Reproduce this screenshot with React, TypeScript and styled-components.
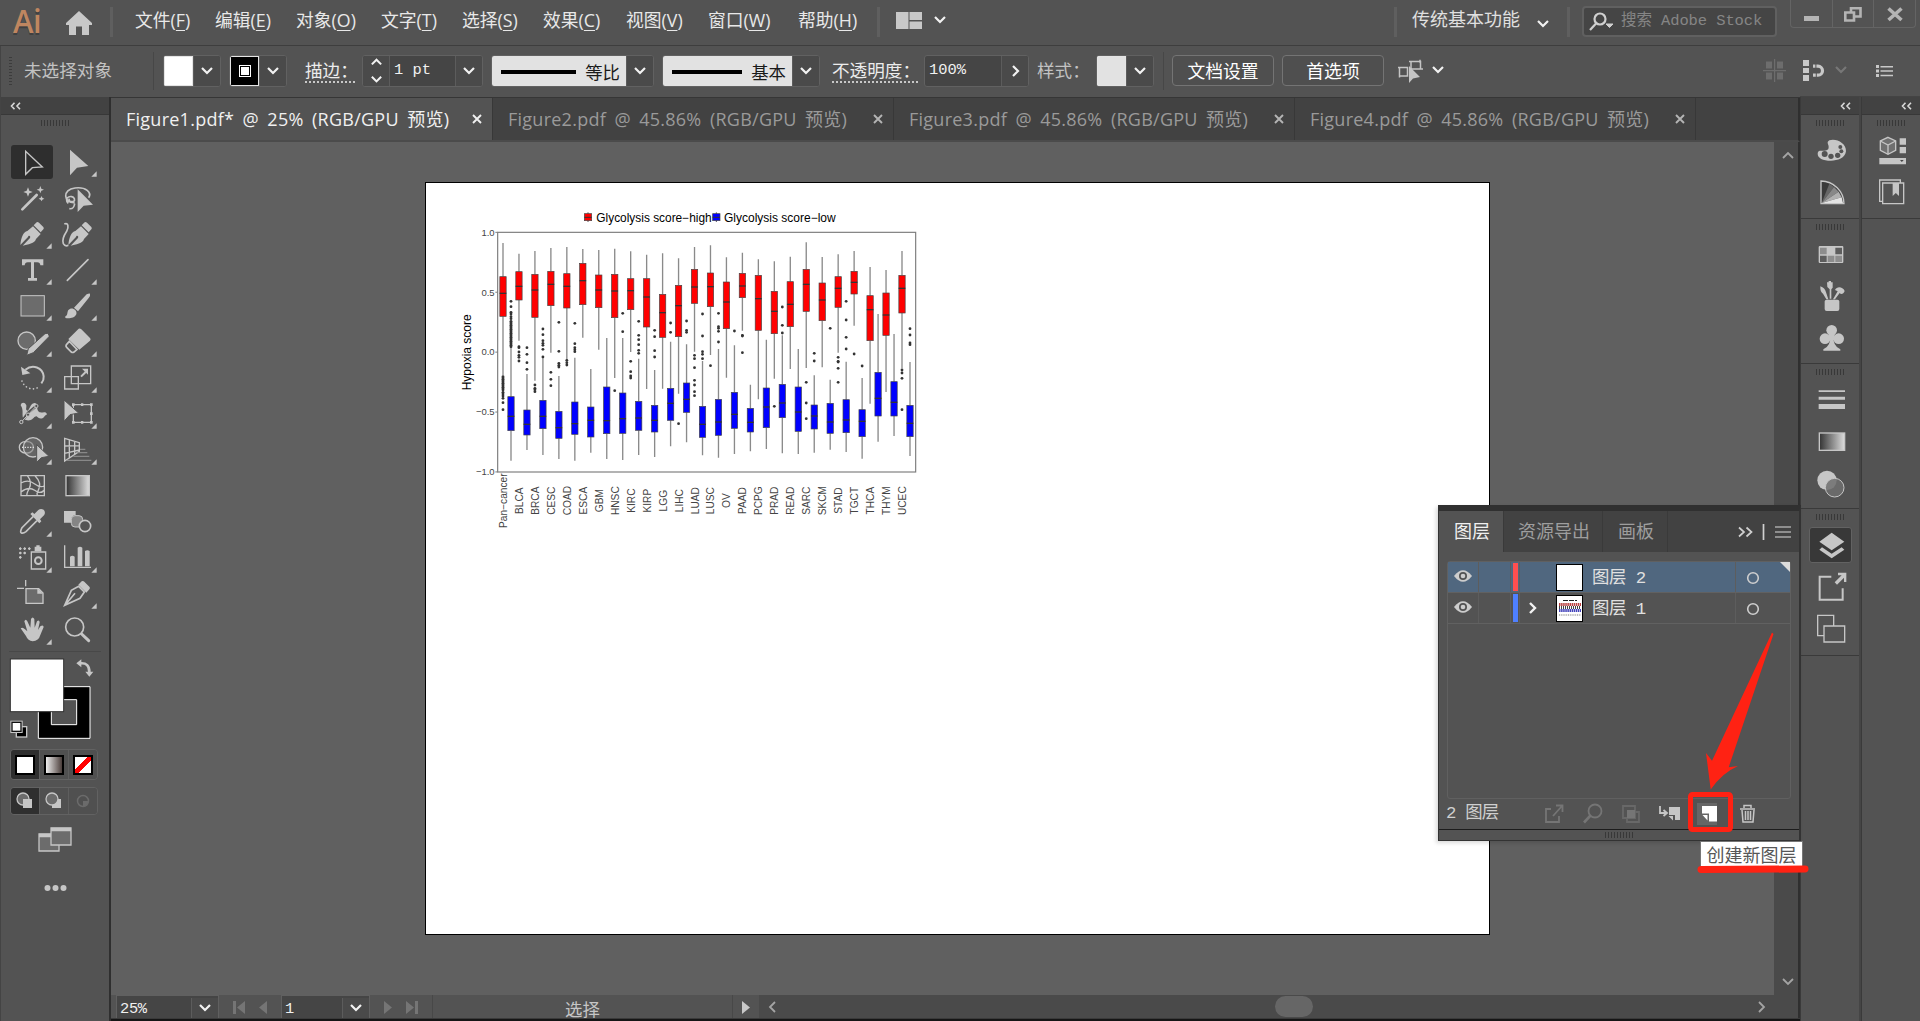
import React from "react";
import styled, { createGlobalStyle, css } from "styled-components";

const ICON = "#c6c6c6";
const UI_FONT = '"Open Sans", "Noto Sans CJK SC", sans-serif';
const MONO_FONT = '"Liberation Mono", "Noto Sans CJK SC", monospace';

const GlobalStyle = createGlobalStyle`
  * { box-sizing: border-box; }
  body { margin: 0; overflow: hidden; background: #535353; }
  svg { display: block; flex: none; }
`;

/* ---------- shell ---------- */
const Shell = styled.div`
  display: grid;
  grid-template-rows: 46px 51px 1fr;
  width: 1920px;
  height: 1021px;
  background: #535353;
  color: #e8e8e8;
  font: 18px/24px ${UI_FONT};
  white-space: nowrap;
  overflow: hidden;
  position: relative;
`;
const Body = styled.div`
  display: grid;
  grid-template-columns: 111px 1fr 120px;
  min-height: 0;
`;

/* ---------- menu bar ---------- */
const MenuBar = styled.header`
  display: flex;
  align-items: flex-start;
  border-bottom: 1px solid #3e3e3e;
`;
const Logo = styled.div`
  width: 40px;
  margin-left: 13px;
  font: 600 32px/41px "Open Sans", sans-serif;
  letter-spacing: -0.5px;
  transform: scaleX(0.97);
  transform-origin: left;
  color: #bf8660;
  text-shadow: 0 2px 0 #404040;
`;
const MenuDivider = styled.i<{ $ml: number }>`
  flex: none;
  width: 3px;
  height: 30px;
  margin: 7px 0 0 ${(p) => p.$ml}px;
  background: #5f5f5f;
`;
const Menus = styled.nav`
  display: flex;
  margin: 8px 0 0 22px;
`;
const MenuItem = styled.span<{ $w: number }>`
  width: ${(p) => p.$w}px;
  font-size: 17.8px;
  line-height: 25px;
  u { text-underline-offset: 3px; text-decoration-thickness: 1px; }
`;
const Slot = styled.div<{ $ml?: number; $mt?: number }>`
  flex: none;
  margin: ${(p) => p.$mt ?? 0}px 0 0 ${(p) => p.$ml ?? 0}px;
`;
const Workspace = styled.span`
  margin: 7px 0 0 15px;
  width: 124px;
  line-height: 24px;
  color: #e0e0e0;
`;
const SearchBox = styled.div`
  display: flex;
  align-items: center;
  width: 195px;
  height: 31px;
  margin: 6px 0 0 12px;
  padding-left: 5px;
  border: 2px solid #606060;
  border-radius: 4px;
  background: #454545;
  color: #858585;
  font: 15.5px/26px ${MONO_FONT};
  letter-spacing: -0.1px;
  span { margin: -1px 0 0 6px; }
`;
const WindowButtons = styled.div`
  display: flex;
  margin-left: 13px;
  width: 126px;
  height: 28px;
  border: 1px solid #646464;
  border-top: 0;
  border-radius: 0 0 4px 4px;
`;
const WindowButton = styled.div`
  flex: 1;
  display: flex;
  justify-content: center;
  & + & { border-left: 1px solid #646464; }
`;

/* ---------- control bar ---------- */
const ControlBar = styled.div`
  display: flex;
  align-items: flex-start;
  padding: 10px 0 0 8px;
  border-left: 1px solid #444;
`;
const DotGrip = styled.i`
  width: 3px;
  height: 28px;
  margin-top: 1px;
  background: repeating-linear-gradient(#3c3c3c 0 1px, transparent 1px 3px);
`;
const Note = styled.span<{ $ml: number; $w: number; $dim?: boolean; $dots?: boolean }>`
  flex: none;
  width: ${(p) => p.$w}px;
  margin-left: ${(p) => p.$ml}px;
  height: ${(p) => (p.$dots ? 27 : 28)}px;
  font-size: 17.6px;
  line-height: ${(p) => (p.$dots ? 29 : 28)}px;
  color: ${(p) => (p.$dim ? "#c2c2c2" : "#ececec")};
  ${(p) => p.$dots && css`border-bottom: 2px dotted #c8c8c8;`}
`;
const BarDivider = styled.i<{ $ml: number }>`
  flex: none;
  width: 1px;
  height: 38px;
  margin: -4px 0 0 ${(p) => p.$ml}px;
  background: #474747;
`;
const Combo = styled.div<{ $ml: number; $w: number }>`
  flex: none;
  display: flex;
  width: ${(p) => p.$w}px;
  height: 32px;
  margin: -1px 0 0 ${(p) => p.$ml}px;
  border: 1px solid #616161;
  border-radius: 3px;
  background: #454545;
  overflow: hidden;
`;
const Drop = styled.div<{ $w?: number; $left?: boolean }>`
  flex: none;
  display: flex;
  align-items: center;
  justify-content: center;
  width: ${(p) => p.$w ?? 27}px;
  background: #4a4a4a;
  border-left: ${(p) => (p.$left ? 0 : 1)}px solid #5c5c5c;
`;
const Spin = styled(Drop)`
  flex-direction: column;
  gap: 4px;
  border-right: 1px solid #5c5c5c;
`;
const Swatch = styled.div<{ $c: string }>`
  flex: 1;
  display: flex;
  align-items: center;
  justify-content: center;
  border: 1px solid #e4e4e4;
  background: ${(p) => p.$c};
`;
const StrokeCore = styled.i`
  width: 10px;
  height: 10px;
  background: #fff;
  border: 1px solid #000;
  outline: 1px solid #fff;
`;
const Value = styled.span`
  flex: 1;
  padding: 1px 0 0 4px;
  font: 15.4px/26px ${MONO_FONT};
  color: #f0f0f0;
`;
const LineSample = styled.div`
  flex: 1;
  display: flex;
  align-items: center;
  justify-content: space-between;
  padding: 2px 6px 0 9px;
  background: #e2e2e2;
  color: #1a1a1a;
  font-size: 17.4px;
  i { height: 4px; flex: 1; margin: -1px 9px 0 0; background: #000; }
`;
const BarButton = styled.button<{ $ml: number; $w: number }>`
  flex: none;
  width: ${(p) => p.$w}px;
  height: 31px;
  margin: -1px 0 0 ${(p) => p.$ml}px;
  padding: 1px 0 0;
  border: 1px solid #747474;
  border-radius: 4px;
  background: #4f4f4f;
  color: #fff;
  font: 17.8px/26px ${UI_FONT};
`;

/* ---------- tool panel ---------- */
const ToolPanel = styled.aside`
  display: flex;
  flex-direction: column;
  border-left: 1px solid #444;
  border-right: 2px solid #2f2f2f;
`;
const PanelHeader = styled.div<{ $right?: boolean }>`
  display: flex;
  align-items: center;
  justify-content: ${(p) => (p.$right ? "flex-end" : "flex-start")};
  flex: none;
  height: 18px;
  padding: 0 8px;
  background: #424242;
  border-bottom: 1px solid #383838;
`;
const Grip = styled.i`
  flex: none;
  width: 28px;
  height: 6px;
  margin: 5px auto 0;
  background: repeating-linear-gradient(90deg, #383838 0 1px, transparent 1px 3px);
`;
const ToolGrid = styled.div`
  display: grid;
  grid-template-columns: 42px 42px;
  grid-auto-rows: 36px;
  column-gap: 3px;
  margin: 18px 0 0 10px;
`;
const ToolCell = styled.div<{ $on?: boolean }>`
  display: flex;
  align-items: center;
  height: 34px;
  margin-top: 1px;
  border-radius: 3px;
  background: ${(p) => (p.$on ? "#2e2e2e" : "transparent")};
  svg { overflow: visible; }
`;
const ToolRule = styled.i`
  height: 1px;
  margin: 3px 8px 0;
  background: #484848;
`;
const FillStroke = styled.div`
  height: 92px;
  margin: 4px 0 0 8px;
`;
const ModeRow = styled.div<{ $h: number; $mt: number }>`
  display: flex;
  width: 88px;
  height: ${(p) => p.$h}px;
  margin: ${(p) => p.$mt}px 0 0 9px;
  border: 1px solid #626262;
  border-radius: 4px;
  overflow: hidden;
`;
const Mode = styled.div<{ $on?: boolean }>`
  flex: 1;
  display: flex;
  align-items: center;
  justify-content: center;
  background: ${(p) => (p.$on ? "#2f2f2f" : "#505050")};
  & + & { border-left: 1px solid #5e5e5e; }
`;
const ModeChip = styled.i<{ $bg: string }>`
  width: 20px;
  height: 20px;
  border: 2px solid #000;
  background: ${(p) => p.$bg};
`;

/* ---------- document area ---------- */
const Center = styled.main`
  display: grid;
  grid-template-rows: 44px 1fr 23px 3px;
  min-width: 0;
  border-top: 1px solid #363636;
`;
const TabBar = styled.div`
  display: flex;
  background: #424242;
  border-bottom: 2px solid #4b4b4b;
  border-right: 2px solid #2f2f2f;
`;
const Tab = styled.div<{ $w: number; $on?: boolean }>`
  display: flex;
  align-items: center;
  justify-content: space-between;
  width: ${(p) => p.$w}px;
  padding: 0 10px 0 15px;
  border-right: 1px solid #383838;
  background: ${(p) => (p.$on ? "#535353" : "transparent")};
  color: ${(p) => (p.$on ? "#f0f0f0" : "#9a9a9a")};
  font-size: 18px;
  letter-spacing: 0.25px;
  word-spacing: 3.5px;
  padding-bottom: 1px;
`;
const Workarea = styled.div`
  display: grid;
  grid-template-columns: 1fr 24px;
  border-right: 2px solid #2f2f2f;
  min-height: 0;
`;
const Canvas = styled.div`
  position: relative;
  background: #606060;
`;
const Artboard = styled.div`
  position: absolute;
  left: 314px;
  top: 40px;
  width: 1065px;
  height: 753px;
  padding: 17px 0 0 24px;
  border: 1px solid #000;
  background: #fff;
`;
const VScroll = styled.div`
  display: flex;
  flex-direction: column;
  align-items: center;
  justify-content: space-between;
  padding: 7px 0 6px 3px;
  background: #4a4a4a;
`;
const StatusBar = styled.div`
  display: flex;
  align-items: center;
  padding-left: 5px;
  background: #535353;
  border-right: 2px solid #2f2f2f;
`;
const StatusField = styled.div<{ $w: number }>`
  display: flex;
  align-self: stretch;
  width: ${(p) => p.$w}px;
  padding-top: 2px;
  background: #454545;
  border: 1px solid #606060;
  border-bottom: 0;
  span { flex: 1; padding-left: 3px; font: 15.4px/23px ${MONO_FONT}; letter-spacing: -0.3px; color: #f0f0f0; }
`;
const StatusNav = styled.div<{ $w: number }>`
  display: flex;
  align-items: center;
  justify-content: space-evenly;
  width: ${(p) => p.$w}px;
  padding-top: 2px;
`;
const StatusText = styled.div`
  width: 301px;
  height: 23px;
  border: solid #484848;
  border-width: 0 1px;
  text-align: center;
  font-size: 17.4px;
  line-height: 29px;
  color: #c6c6c6;
`;
const HScroll = styled.div`
  flex: 1;
  align-self: stretch;
  display: flex;
  align-items: center;
  padding: 0 30px 0 7px;
  background: #4a4a4a;
`;
const Thumb = styled.i`
  width: 38px;
  height: 21px;
  margin: 0 auto 0 495px;
  border-radius: 11px;
  background: #666;
`;
const BottomEdge = styled.div`
  position: relative;
  background: #151515;
  border-top: 1px solid #3a3a3a;
`;

/* ---------- docks ---------- */
const Docks = styled.aside`
  display: grid;
  grid-template-columns: 61px 59px;
  border-top: 1px solid #444;
  margin-top: -1px;
`;
const Dock = styled.div`
  display: flex;
  flex-direction: column;
  border-left: 1px solid #3a3a3a;
  border-right: 2px solid #454545;
  &:last-child { border-right: 0; }
`;
const DockGroup = styled.div<{ $h: number }>`
  flex: none;
  display: flex;
  flex-direction: column;
  align-items: center;
  height: ${(p) => p.$h}px;
  border-bottom: 1px solid #3a3a3a;
  ${Grip} { margin-bottom: 4px; }
`;
const DockItem = styled.div<{ $on?: boolean }>`
  flex: none;
  display: flex;
  align-items: center;
  justify-content: center;
  width: 43px;
  height: 36px;
  margin: 3px 0;
  border-radius: 3px;
  border: 1px solid ${(p) => (p.$on ? "#626262" : "transparent")};
  background: ${(p) => (p.$on ? "#383838" : "transparent")};
`;

/* ---------- floating layers panel ---------- */
const LayersPanel = styled.section`
  position: absolute;
  left: 1438px;
  top: 505px;
  width: 363px;
  height: 336px;
  display: flex;
  flex-direction: column;
  border: 1px solid #333;
  border-top: 6px solid #303030;
  border-right-width: 2px;
  background: #535353;
  box-shadow: -2px 2px 4px rgba(0, 0, 0, 0.15);
`;
const LayersTabs = styled.div`
  display: flex;
  flex: none;
  height: 41px;
  background: #424242;
`;
const LayersTab = styled.div<{ $w: number; $on?: boolean }>`
  width: ${(p) => p.$w}px;
  padding-left: 2px;
  border-right: 1px solid #3a3a3a;
  text-align: center;
  line-height: 41px;
  background: ${(p) => (p.$on ? "#535353" : "transparent")};
  color: ${(p) => (p.$on ? "#f0f0f0" : "#9e9e9e")};
`;
const LayersTools = styled.div`
  margin-left: auto;
  padding-right: 8px;
  display: flex;
  align-items: center;
`;
const LayerList = styled.div`
  flex: none;
  height: 238px;
  margin: 9px 8px 0 8px;
  border: 1px solid #606060;
  border-radius: 3px;
`;
const LayerRow = styled.div<{ $on?: boolean }>`
  position: relative;
  display: grid;
  grid-template-columns: 31px 32px 9px 1fr 54px;
  height: 31px;
  border-bottom: 1px solid #616161;
  background: ${(p) => (p.$on ? "#50677f" : "transparent")};
`;
const LayerCell = styled.div<{ $last?: boolean }>`
  display: flex;
  align-items: center;
  justify-content: center;
  height: 30px;
  padding: ${(p) => (p.$last ? "1px 20px 0 0" : "0 1px 2px 0")};
  border-right: ${(p) => (p.$last ? 0 : 1)}px solid #5d5d5d;
`;
const LayerColor = styled.div<{ $c: string }>`
  display: flex;
  padding: 1px 1px 1px 2px;
  border-right: 1px solid #5d5d5d;
  &::before { content: ""; flex: 1; background: ${(p) => p.$c}; }
`;
const LayerName = styled.div`
  display: flex;
  align-items: center;
  padding-left: 5px;
  border-right: 1px solid #5d5d5d;
  color: #e0e0e0;
  font-family: ${MONO_FONT};
  font-size: 17.4px;
  letter-spacing: -0.5px;
  span { padding-top: 4px; }
`;
const Expander = styled.i`
  width: 31px;
  display: flex;
`;
const Thumbnail = styled.i`
  width: 27px;
  height: 27px;
  margin: 1px 9px 0 0;
  border: 1px solid #000;
  background: #fff;
`;
const RowCorner = styled.i`
  position: absolute;
  right: 0;
  top: 0;
  border: 5px solid #dcdcdc;
  border-left-color: transparent;
  border-bottom-color: transparent;
`;
const LayersFooter = styled.div`
  flex: 1;
  display: flex;
  align-items: center;
  padding: 0 44px 0 7px;
  color: #cfcfcf;
  font: 17.4px/24px ${MONO_FONT};
  letter-spacing: -0.8px;
  svg:first-of-type { margin-left: auto; }
`;
const FooterEdge = styled.div`
  flex: none;
  height: 11px;
  border-top: 1px solid #1c1c1c;
  ${Grip} { display: block; margin-top: 2px; }
`;
const Tooltip = styled.div`
  position: absolute;
  left: 1700px;
  top: 841px;
  width: 103px;
  height: 26px;
  border: 1px solid #767676;
  background: #fff;
  color: #575757;
  text-align: center;
  line-height: 27px;
  font-size: 18px;
`;
const Annotation = styled.svg`
  position: absolute;
  left: 1680px;
  top: 620px;
`;

/* ---------- small glyphs ---------- */
type Dir = "down" | "up" | "left" | "right";
const chevronPaths: Record<Dir, string> = {
  down: "M2 4 L7 9 L12 4",
  up: "M2 9 L7 4 L12 9",
  left: "M9 2 L4 7 L9 12",
  right: "M5 2 L10 7 L5 12",
};
const Chevron = ({ dir = "down", color = "#f2f2f2", w = 2.2, size = 14 }: { dir?: Dir; color?: string; w?: number; size?: number }) => (
  <svg width={size} height={size} viewBox="0 0 14 14" fill="none" stroke={color} strokeWidth={w}>
    <path d={chevronPaths[dir]} />
  </svg>
);
const Collapse = () => (
  <svg width="12" height="8" viewBox="0 0 12 8" fill="none" stroke="#d8d8d8" strokeWidth="1.6">
    <path d="M5.500 .8 L2.500 4 L5.500 7.200 M11 .8 L8 4 L11 7.200" />
  </svg>
);
const Cross = ({ color }: { color: string }) => (
  <svg width="10" height="10" viewBox="0 0 10 10" stroke={color} strokeWidth="1.9">
    <path d="M1 1 L9 9 M9 1 L1 9" />
  </svg>
);

/* ---------- tools ---------- */
type Tool = { y: number; art: React.ReactNode; more?: boolean; on?: boolean };
const tools: Tool[] = [
  { y: 98, on: true, art: <path d="M77 66 V135 L97 115 L127 113 Z" fill="none" stroke={ICON} strokeWidth="4" /> },
  { y: 98, more: true, art: <path d="M210 61 V138 L231 115 L265 110 Z" /> },
  { y: 206, art: <><path d="M67 240 L110 197" stroke={ICON} strokeWidth="8" strokeLinecap="round" /><path d="M84 174 L88 184 L98 188 L88 192 L84 202 L80 192 L70 188 L80 184Z M121 170 L124 178 L132 181 L124 184 L121 192 L118 184 L110 181 L118 178Z M125 200 L127 205 L133 208 L127 211 L125 216 L122 211 L116 208 L122 205Z" /></> },
  { y: 206, more: false, art: <><path d="M224 220 C190 222 186 180 225 176 C258 172 276 190 266 205 M205 222 C188 205 216 194 223 208 C228 222 202 218 208 208 M224 223 C222 238 216 239 208 238" fill="none" stroke={ICON} strokeWidth="5" /><path d="M233 180 V248 L251 229 L279 226Z" /></> },
  { y: 314, more: true, art: <><path d="M61 347 C63 325 70 307 82 305 L99 291 L122 314 L108 329 C105 342 83 346 68 349 L90 326 C93 319 85 317 84 323Z M101 288 L110 279 Q113 277 117 280 L130 293 Q133 297 130 300 L122 309Z" /></> },
  { y: 314, art: <><path d="M193 284 C205 278 207 294 200 306 C192 318 185 330 190 343 C194 350 201 350 205 348" fill="none" stroke={ICON} strokeWidth="5" /><path d="M205 347 C207 325 214 307 226 305 L243 291 L266 314 L252 329 C249 342 227 346 212 349 L234 326 C237 319 229 317 228 323Z M245 288 L254 279 Q257 277 261 280 L274 293 Q277 297 274 300 L266 309Z" /></> },
  { y: 422, more: true, art: <path d="M66 390 H130 V408 H121 Q120 399 112 399 H102 V446 H111 V454 H84 V446 H93 V399 H83 Q75 399 74 408 H66Z" /> },
  { y: 422, more: true, art: <path d="M202 453 L264 391" stroke={ICON} strokeWidth="5" strokeLinecap="round" /> },
  { y: 530, more: true, art: <rect x="63" y="499" width="70" height="61" fill="#6c6c6c" stroke={ICON} strokeWidth="3" /> },
  { y: 530, more: true, art: <path d="M196 561 C206 558 198 542 211 538 C222 536 232 545 229 555 C223 568 205 568 196 566Z M222 535 L260 495 Q268 491 270 493 Q272 499 266 506 L234 546Z" /> },
  { y: 638, more: true, art: <><circle cx="80" cy="634" r="26" fill="#6c6c6c" stroke={ICON} strokeWidth="4" /><path d="M80 678 L85 658 L135 613 Q143 609 147 617 L147 622 L100 670Z" stroke="#535353" strokeWidth="3" /></> },
  { y: 638, more: true, art: <><path d="M205 629 L236 598 Q240 596 244 600 L270 626 Q274 630 270 634 L238 661Z" /><path d="M208 636 L200 645 Q196 650 200 654 L214 668 Q218 671 222 668 L231 660 Z" fill="none" stroke={ICON} strokeWidth="5" /></> },
  { y: 746, more: true, art: <><path d="M76 721 C98 704 128 714 131 741 C132 749 128 757 124 762" fill="none" stroke={ICON} strokeWidth="6" /><path d="M63 712 L67 737 L91 732Z" /><path d="M66 755 C72 775 100 788 120 770" fill="none" stroke={ICON} strokeWidth="5" strokeDasharray="0.1 11" strokeLinecap="round" /></> },
  { y: 746, more: true, art: <><path d="M214 710 H272 V763 H214Z M194 742 H235 V779 H194Z" fill="none" stroke={ICON} strokeWidth="4" /><path d="M243 742 L257 728" stroke={ICON} strokeWidth="6" /><path d="M246 718 H264 V736Z" /></> },
  { y: 75, more: true, art: <><path d="M62 49 C64 39 75 39 79 49 C80 58 75 64 84 65 C92 54 91 45 103 42 C116 43 108 56 115 67 C123 76 135 63 141 75 C138 80 135 78 132 84 C125 92 114 88 110 82 C101 82 101 91 90 94 C78 96 68 91 68 82 C67 70 70 61 62 49Z" /><path d="M64 99 L84 72 L109 51" stroke="#535353" strokeWidth="8" fill="none" /><path d="M64 99 L109 51" stroke={ICON} strokeWidth="3" /><circle cx="64" cy="99" r="5" fill="#535353" stroke={ICON} strokeWidth="3" /><circle cx="84" cy="77" r="5" fill="#535353" stroke={ICON} strokeWidth="3" /><circle cx="109" cy="51" r="5" fill="#535353" stroke={ICON} strokeWidth="3" /></> },
  { y: 75, more: true, art: <><path d="M220 47 H274 V100 H220Z" fill="none" stroke={ICON} strokeWidth="4" /><path d="M216 43h8v8h-8z M243 43h7v8h-7z M270 43h8v8h-8z M270 70h8v8h-8z M270 96h8v8h-8z M243 96h7v8h-7z M216 96h8v8h-8z" /><path d="M192 33 V97 L210 77 L236 72Z" stroke="#535353" strokeWidth="3" /></> },
  { y: 183, more: true, art: <><rect x="58" y="158" width="42" height="34" rx="17" fill="none" stroke={ICON} strokeWidth="4" /><circle cx="99" cy="175" r="29" fill="#777" fillOpacity=".5" stroke={ICON} strokeWidth="4" /><path d="M66 175 H106" stroke="#ddd" strokeWidth="4" strokeDasharray="4 4" /><path d="M110 167 V220 L124 206 L147 202Z" stroke="#535353" strokeWidth="3" /></> },
  { y: 183, more: true, art: <><path d="M194 148 V216 L238 187 V161 Z M208 152 V206 M224 157 V196 M194 171 L238 170 M194 193 L238 183" fill="none" stroke={ICON} strokeWidth="4" /><path d="M240 181 H256 M232 191 H262 M220 202 H268 M200 214 H274" stroke="#888" strokeWidth="4" /></> },
  { y: 291, art: <path d="M63 260 H133 V320 H63Z M63 282 Q84 270 103 284 T133 290 M63 309 Q86 291 104 304 T133 303 M82 260 Q98 280 87 300 T84 320 M105 260 Q126 282 116 301 T116 320" fill="none" stroke={ICON} strokeWidth="4" /> },
  { y: 291, art: <><defs><linearGradient id="toolGrad"><stop offset="0" stopColor="#333" /><stop offset="1" stopColor="#ddd" /></linearGradient></defs><rect x="198" y="260" width="70" height="60" fill="url(#toolGrad)" stroke={ICON} strokeWidth="4" /></> },
  { y: 399, more: true, art: <><path d="M100 382 L66 416 Q59 430 64 432 Q70 434 78 428 L111 395" fill="none" stroke={ICON} strokeWidth="5" /><path d="M91 375 L97 370 L103 375 L115 363 Q122 357 131 362 Q138 370 132 379 L120 391 L124 397 L118 403Z" /></> },
  { y: 399, art: <><path d="M192 366 H227 V378 Q214 380 215 390 V401 H192Z" /><rect x="214" y="380" width="34" height="34" rx="11" fill="#858585" stroke={ICON} strokeWidth="3" /><circle cx="255" cy="411" r="17" fill="#535353" stroke={ICON} strokeWidth="5" /></> },
  { y: 507, more: true, art: <><path d="M94 489 H137 V540 H94Z" fill="none" stroke={ICON} strokeWidth="4" /><path d="M104 473 H109 V469 H119 V473 H124 V487 H104Z" /><circle cx="115" cy="515" r="10" fill="none" stroke={ICON} strokeWidth="6" /><path d="M57 479 h8 M70 479 h8 M84 479 h8 M57 492 h8 M70 492 h8 M57 505 h8 M61 475 v8 M74 475 v8 M88 475 v8 M61 488 v8 M74 488 v8 M61 501 v8" stroke={ICON} strokeWidth="4" /></> },
  { y: 507, more: true, art: <><path d="M194 469 V535 H273" fill="none" stroke={ICON} strokeWidth="4" /><path d="M210 503 Q217 497 224 503 V532 H210Z M233 476 Q240 471 247 476 V532 H233Z M255 486 Q262 481 269 486 V532 H255Z" /></> },
  { y: 615, art: <><path d="M78 599 H116 L129 612 V643 H78Z" fill="#6c6c6c" stroke={ICON} strokeWidth="4" /><path d="M112 597 V614 H129Z" /><path d="M51 598 H72 M77 573 V592" stroke={ICON} strokeWidth="4" /></> },
  { y: 615, more: true, art: <><path d="M194 649 L214 604 L236 592 L253 609 L240 628 Z M196 647 L225 613" fill="none" stroke={ICON} strokeWidth="5" /><path d="M235 587 L245 577 Q249 574 253 578 L268 593 Q272 597 268 601 L259 611Z" /></> },
  { y: 723, more: true, art: <path d="M62 718 Q68 713 75 721 L82 727 L73 697 Q77 688 82 697 L91 716 L93 690 Q98 681 103 690 L104 716 L111 697 Q118 691 119 700 L114 723 L121 712 Q130 706 131 714 L121 738 Q116 756 98 757 Q84 756 78 741Z" /> },
  { y: 723, art: <><circle cx="224" cy="714" r="27" fill="none" stroke={ICON} strokeWidth="5" /><path d="M245 735 L266 755" stroke={ICON} strokeWidth="9" strokeLinecap="round" /></> },
];
const ToolIcon = ({ tool, x }: { tool: Tool; x: number }) => (
  <svg width="42" height="36" viewBox={`${x} ${tool.y - 54} 126 108`} fill={ICON}>
    {tool.art}
    {tool.more && <path d={`M${x + 122} ${tool.y + 28} v16 h-16z`} />}
  </svg>
);

/* ---------- dock icons ---------- */
const DockIcon = ({ x = 157, y, children }: { x?: number; y: number; children: React.ReactNode }) => (
  <svg width="36" height="34" viewBox={`${x - 59} ${y - 50} 108 102`} fill={ICON}>{children}</svg>
);

/* ---------- box plot data, in plot units from the top of the figure ---------- */
type Box = [number, number, number, number, number, number[]];
const range = (a: number, b: number, step: number) => Array.from({ length: Math.floor((b - a) / step) + 1 }, (_, i) => a + i * step);
const cancers = ["Pan−cancer", "BLCA", "BRCA", "CESC", "COAD", "ESCA", "GBM", "HNSC", "KIRC", "KIRP", "LGG", "LIHC", "LUAD", "LUSC", "OV", "PAAD", "PCPG", "PRAD", "READ", "SARC", "SKCM", "STAD", "TGCT", "THCA", "THYM", "UCEC"];
const high: Box[] = [
  [129, 230, 280, 349, 525, [...range(530, 570, 4), 577, 582, 588, 595, 608, 629]],
  [161, 215, 259, 300, 422, [440, 443, 456, 466, 472, 483]],
  [153, 223, 270, 352, 542, [555, 565, 569, 575]],
  [144, 214, 253, 317, 458, [517, 538, 557]],
  [141, 221, 259, 324, 478, [481, 488, 495]],
  [147, 190, 242, 314, 413, []],
  [150, 225, 270, 323, 449, []],
  [146, 223, 273, 353, 534, [572]],
  [154, 236, 272, 329, 456, [484, 515, 528, 534]],
  [164, 236, 291, 381, 567, []],
  [160, 283, 338, 412, 566, []],
  [175, 256, 317, 410, 581, [671]],
  [141, 208, 261, 310, 455, [466, 476, 503, 541, 555, 575, 587]],
  [136, 219, 260, 320, 465, [497]],
  [172, 246, 306, 386, 533, []],
  [158, 220, 258, 293, 392, [406, 408, 458]],
  [178, 226, 296, 391, 598, []],
  [184, 274, 334, 401, 536, [619]],
  [170, 245, 313, 380, 507, []],
  [127, 208, 253, 334, 504, [547, 609, 656]],
  [171, 249, 300, 362, 502, []],
  [163, 230, 265, 322, 458, [472, 484, 486, 505, 547]],
  [153, 214, 247, 282, 377, [462]],
  [201, 287, 329, 422, 611, []],
  [210, 279, 345, 406, 576, []],
  [153, 226, 265, 339, 505, [510, 519, 535, 629]],
];
const low: Box[] = [
  [440, 590, 649, 692, 782, [304, 320, 337, 342, 350, 356, ...range(364, 440, 4)]],
  [522, 630, 673, 705, 750, [443, 463, 488, 508]],
  [475, 601, 649, 686, 765, [387, 404, 422, 430, 436, 448, 471]],
  [528, 634, 683, 715, 777, [367, 454, 490, 496, 501]],
  [473, 606, 671, 703, 782, [370, 431, 443, 449, 455]],
  [507, 621, 661, 711, 758, []],
  [414, 561, 662, 701, 777, []],
  [414, 579, 656, 700, 780, [340, 395]],
  [476, 604, 654, 691, 765, [364, 406, 419, 434, 451, 460]],
  [510, 616, 661, 696, 771, [391, 410, 452, 471]],
  [425, 565, 610, 661, 739, [369, 397]],
  [433, 549, 598, 637, 727, [363, 391, 397]],
  [483, 619, 673, 712, 766, [342, 408, 455, 463, 476]],
  [447, 598, 666, 706, 773, [340, 380, 385, 394, 426]],
  [436, 577, 643, 685, 762, [393]],
  [554, 625, 667, 696, 754, []],
  [419, 564, 621, 683, 747, []],
  [406, 553, 609, 653, 760, [321, 376, 399]],
  [447, 561, 636, 694, 762, []],
  [526, 615, 648, 687, 758, [460, 483]],
  [539, 610, 666, 700, 749, [385]],
  [485, 599, 660, 698, 756, [304, 360, 412, 447]],
  [534, 629, 664, 710, 776, [498]],
  [342, 517, 595, 648, 725, []],
  [402, 545, 607, 648, 708, []],
  [486, 616, 670, 710, 768, [386, 405, 429, 434]],
];
const BoxMark = ({ x, box, color }: { x: number; box: Box; color: string }) => (
  <g>
    <path d={`M${x} ${box[0]} V${box[1]} M${x} ${box[3]} V${box[4]}`} stroke="#8a8a8a" strokeWidth="4" />
    <rect x={x - 9.5} y={box[1]} width="19" height={box[3] - box[1]} fill={color} stroke="#444" strokeWidth="2" />
    <path d={`M${x - 10} ${box[2]} h20`} stroke="#333" strokeWidth="4" />
    {box[5].map((o, i) => <circle key={i} cx={x} cy={o} r="4.2" fill="#333" />)}
  </g>
);
const PlotText = styled.text<{ $size: number; $c?: string }>`
  font-family: "Liberation Sans", Arial, sans-serif;
  font-size: ${(p) => p.$size}px;
  fill: ${(p) => p.$c ?? "#000"};
`;
const BoxPlot = () => (
  <svg width="470" height="340" viewBox="0 0 1410 1020">
    <rect x="143" y="97" width="1254" height="719" fill="none" stroke="#7d7d7d" strokeWidth="3.5" />
    {["1.0", "0.5", "0.0", "−0.5", "−1.0"].map((t, i) => (
      <g key={t}>
        <path d={`M136 ${97 + i * 179.7} h7`} stroke="#7d7d7d" strokeWidth="3" />
        <PlotText $size={28.5} $c="#444" x="134" y={107 + i * 179.7} textAnchor="end">{t}</PlotText>
      </g>
    ))}
    {cancers.map((name, i) => {
      const x = 159 + i * 47.88;
      return (
        <g key={name}>
          <BoxMark x={x} box={high[i]} color="#ff0000" />
          <BoxMark x={x + 24} box={low[i]} color="#0000ff" />
          <PlotText $size={30.5} $c="#444" textAnchor="middle" transform={`translate(${x + 12} 902) rotate(-90)`}>{name}</PlotText>
        </g>
      );
    })}
    <PlotText $size={36} textAnchor="middle" transform="translate(64 457) rotate(-90)">Hypoxia score</PlotText>
    <path d="M414 37 V66" stroke="#555" strokeWidth="3" />
    <rect x="403" y="41" width="22" height="21" fill="#f00" stroke="#444" strokeWidth="2" />
    <path d="M403 52 h22" stroke="#333" strokeWidth="3" />
    <PlotText $size={35.7} x="439" y="65">Glycolysis score−high</PlotText>
    <path d="M799 37 V66" stroke="#555" strokeWidth="3" />
    <rect x="788" y="41" width="22" height="21" fill="#00f" stroke="#444" strokeWidth="2" />
    <path d="M788 52 h22" stroke="#333" strokeWidth="3" />
    <PlotText $size={36} x="822" y="65">Glycolysis score−low</PlotText>
  </svg>
);

const menuItems: [string, string, number][] = [
  ["文件", "F", 80], ["编辑", "E", 81], ["对象", "O", 85], ["文字", "T", 81], ["选择", "S", 81],
  ["效果", "C", 83], ["视图", "V", 82], ["窗口", "W", 90], ["帮助", "H", 65],
];
const Eye = () => (
  <svg width="18" height="12" viewBox="0 0 18 12">
    <path d="M0 6 Q9 -5.500 18 6 Q9 17.500 0 6Z" fill="#cdcdcd" />
    <circle cx="9" cy="6" r="4" fill="#535353" />
    <circle cx="9" cy="6" r="2.300" fill="#cdcdcd" />
  </svg>
);
const Target = () => (
  <svg width="14" height="14" viewBox="0 0 14 14"><circle cx="7" cy="7" r="5.300" fill="none" stroke="#cfcfcf" strokeWidth="1.600" /></svg>
);

export default function App() {
  return (
    <>
      <GlobalStyle />
      <Shell>
        <MenuBar>
          <Logo>Ai</Logo>
          <Slot $ml={12} $mt={11}>
            <svg width="28" height="25" viewBox="0 0 28 25" fill="#c8c8c8"><path d="M14 0 L27 12 V14 H24 V24 H17 V15.500 H11 V24 H4 V14 H1 V12Z" /></svg>
          </Slot>
          <MenuDivider $ml={17} />
          <Menus>
            {menuItems.map(([label, key, w]) => <MenuItem key={key} $w={w}>{label}(<u>{key}</u>)</MenuItem>)}
          </Menus>
          <MenuDivider $ml={14} />
          <Slot $ml={16} $mt={12}>
            <svg width="26" height="17" viewBox="0 0 26 17" fill="#c8c8c8"><path d="M0 0h12.500v17H0z M13.500 0H26v8H13.500z M13.500 9.500H26V17H13.500z" /></svg>
          </Slot>
          <Slot $ml={11} $mt={13}><Chevron /></Slot>
          <MenuDivider $ml={447} />
          <Workspace>传统基本功能</Workspace>
          <Slot $ml={0} $mt={17}><Chevron /></Slot>
          <MenuDivider $ml={17} />
          <SearchBox>
            <svg width="26" height="20" viewBox="0 0 26 20" fill="none" stroke="#d0d0d0" strokeWidth="2.200">
              <circle cx="11" cy="7" r="5.500" /><path d="M7.500 11 L1 18" /><path d="M17 12 h7 l-3.500 3.500z" fill="#d0d0d0" strokeWidth="1" />
            </svg>
            <span>搜索 Adobe Stock</span>
          </SearchBox>
          <WindowButtons>
            <WindowButton><svg width="17" height="28" viewBox="0 0 17 28"><path d="M1 16h15v5H1z" fill="#b4b4b4" /></svg></WindowButton>
            <WindowButton>
              <svg width="20" height="28" viewBox="0 0 20 28" fill="none" stroke="#b4b4b4" strokeWidth="2.600"><path d="M8 12 V8.300 H17.500 V16.500 H12 M2.300 12.500 H11 V20.500 H2.300Z" /></svg>
            </WindowButton>
            <WindowButton><svg width="18" height="28" viewBox="0 0 18 28" stroke="#b4b4b4" strokeWidth="3.600"><path d="M2.500 8.500 L15.500 20 M15.500 8.500 L2.500 20" /></svg></WindowButton>
          </WindowButtons>
        </MenuBar>

        <ControlBar>
          <DotGrip />
          <Note $ml={12} $w={100} $dim>未选择对象</Note>
          <BarDivider $ml={29} />
          <Combo $ml={9} $w={58}><Swatch $c="#fff" /><Drop><Chevron /></Drop></Combo>
          <Combo $ml={8} $w={58}><Swatch $c="#000"><StrokeCore /></Swatch><Drop><Chevron /></Drop></Combo>
          <Note $ml={18} $w={50} $dots>描边：</Note>
          <Combo $ml={7} $w={121}>
            <Spin $left $w={27}><Chevron dir="up" size={13} /><Chevron size={13} /></Spin>
            <Value>1 pt</Value><Drop><Chevron /></Drop>
          </Combo>
          <Combo $ml={8} $w={163}><LineSample><i />等比</LineSample><Drop><Chevron /></Drop></Combo>
          <Combo $ml={8} $w={158}><LineSample><i />基本</LineSample><Drop><Chevron /></Drop></Combo>
          <Note $ml={12} $w={86} $dots>不透明度：</Note>
          <Combo $ml={6} $w={105}><Value>100%</Value><Drop><Chevron dir="right" /></Drop></Combo>
          <Note $ml={8} $w={52} $dim>样式：</Note>
          <Combo $ml={7} $w={58}><Swatch $c="#e2e2e2" /><Drop><Chevron /></Drop></Combo>
          <BarDivider $ml={9} />
          <BarButton $ml={8} $w={102}>文档设置</BarButton>
          <BarButton $ml={8} $w={102}>首选项</BarButton>
          <Slot $ml={14} $mt={3}>
            <svg width="25" height="26" viewBox="0 0 25 26" fill="none" stroke="#c4c4c4" strokeWidth="1.500">
              <path d="M13 2.500 H22.500 V10 H13Z M1.500 8.500 H9.500 V17 H1.500Z M11 2.500h3 M22 .8v3 M0 8.500h3 M1.500 15v3.500 M21 10h4" />
              <path d="M11 7 V24 L15 19.500 L22 18Z" fill="#c4c4c4" stroke="none" />
            </svg>
          </Slot>
          <Slot $ml={8} $mt={7}><Chevron /></Slot>
          <Slot $ml={318} $mt={3}>
            <svg width="24" height="24" viewBox="0 0 24 24" fill="#6d6d6d"><path d="M3 2.500h6v7H3z M14 2.500h6v7h-6z M3 13.500h6v7H3z M14 13.500h6v7h-6z M11 0h1.200v23H11z M0 11h23v1.200H0z" /></svg>
          </Slot>
          <Slot $ml={16} $mt={4}>
            <svg width="22" height="22" viewBox="0 0 22 22" fill="#c8c8c8">
              <path d="M0 0h6v6H0z M0 8h6v5H0z M0 15h6v6H0z" />
              <path d="M10 6.200 h5 a4.500 4.500 0 0 1 0 9 h-5" fill="none" stroke="#c8c8c8" strokeWidth="3.200" strokeDasharray="2.400 1 16.600 1 4" />
            </svg>
          </Slot>
          <Slot $ml={9} $mt={7}><Chevron color="#777" /></Slot>
          <Slot $ml={28} $mt={9}>
            <svg width="17" height="12" viewBox="0 0 17 12" fill="#c8c8c8"><path d="M0 0h3v3H0z M0 4.500h3v3H0z M0 9h3v3H0z M4.500 1H17v1.500H4.500z M4.500 5.300H17v1.500H4.500z M4.500 9.700H17v1.500H4.500z" /></svg>
          </Slot>
        </ControlBar>

        <Body>
          <ToolPanel>
            <PanelHeader><Collapse /></PanelHeader>
            <Grip />
            <ToolGrid>
              {tools.map((t, i) => <ToolCell key={i} $on={t.on}><ToolIcon tool={t} x={i % 2 ? 168 : 33} /></ToolCell>)}
            </ToolGrid>
            <ToolRule />
            <FillStroke>
              <svg width="92" height="92" viewBox="27 50 276 276">
                <path d="M115 142 H270 V297 H115Z M154 181 V256 H230 V181Z" fill="#000" fillRule="evenodd" stroke="#fff" strokeWidth="3" />
                <rect x="31" y="59" width="160" height="158" fill="#fff" stroke="#333" strokeWidth="3" />
                <path d="M242 72 Q268 70 268 98" fill="none" stroke={ICON} strokeWidth="8" />
                <path d="M229 72 L244 60 V84Z M256 97 H280 L268 112Z" fill={ICON} />
                <rect x="49" y="262" width="31" height="31" fill="#000" stroke={ICON} strokeWidth="4" />
                <rect x="33" y="246" width="33" height="33" fill="#fff" stroke={ICON} strokeWidth="4" />
                <rect x="36" y="249" width="27" height="27" fill="#fff" stroke="#111" strokeWidth="4" />
              </svg>
            </FillStroke>
            <ModeRow $h={31} $mt={1}>
              <Mode $on><ModeChip $bg="#fff" /></Mode>
              <Mode><ModeChip $bg="linear-gradient(90deg, #eee, #4a3d3a)" /></Mode>
              <Mode><ModeChip $bg="linear-gradient(to top left, #fff 40%, #f00 40% 60%, #fff 60%)" /></Mode>
            </ModeRow>
            <ModeRow $h={28} $mt={7}>
              <Mode $on><svg width="18" height="18" viewBox="0 0 18 18"><circle cx="7" cy="7" r="6" fill="#6c6c6c" stroke={ICON} strokeWidth="1.300" /><path d="M7 7h9v9H7z" fill={ICON} /></svg></Mode>
              <Mode><svg width="18" height="18" viewBox="0 0 18 18"><path d="M7 7h9v9H7z" fill={ICON} /><circle cx="7" cy="7" r="6" fill="#6c6c6c" stroke={ICON} strokeWidth="1.300" /></svg></Mode>
              <Mode><svg width="14" height="14" viewBox="0 0 14 14"><circle cx="7" cy="7" r="5.500" fill="none" stroke="#6b6b6b" strokeWidth="1.500" /><path d="M7 7h5.500 a5.500 5.500 0 0 1 -5.500 5.500z" fill="#6b6b6b" /></svg></Mode>
            </ModeRow>
            <Slot $ml={37} $mt={12}>
              <svg width="34" height="26" viewBox="0 0 34 26" fill="#6c6c6c" stroke={ICON} strokeWidth="1.300">
                <path d="M1 7 H21 V24 H1Z" /><path d="M1 8.500H21" strokeWidth="3.500" /><path d="M13 1 H33 V18 H13Z" /><path d="M13 2.500H33" strokeWidth="3.500" />
              </svg>
            </Slot>
            <Slot $ml={43} $mt={31}>
              <svg width="24" height="8" viewBox="0 0 24 8" fill={ICON}><circle cx="3.500" cy="4" r="3" /><circle cx="11.500" cy="4" r="3" /><circle cx="19.500" cy="4" r="3" /></svg>
            </Slot>
          </ToolPanel>

          <Center>
            <TabBar>
              <Tab $w={382} $on>Figure1.pdf* @ 25% (RGB/GPU 预览)<Cross color="#f0f0f0" /></Tab>
              {[2, 3, 4].map((n) => <Tab key={n} $w={401}>{`Figure${n}.pdf @ 45.86% (RGB/GPU 预览)`}<Cross color="#b4b4b4" /></Tab>)}
            </TabBar>
            <Workarea>
              <Canvas><Artboard><BoxPlot /></Artboard></Canvas>
              <VScroll><Chevron dir="up" color="#a4a4a4" w={1.8} /><Chevron color="#a4a4a4" w={1.8} /></VScroll>
            </Workarea>
            <StatusBar>
              <StatusField $w={103}><span>25%</span><Drop><Chevron /></Drop></StatusField>
              <StatusNav $w={62}>
                <svg width="13" height="13" viewBox="0 0 13 13" fill="#757575"><path d="M0 0h3v13H0z M12 0v13L4 6.500z" /></svg>
                <svg width="8" height="13" viewBox="0 0 8 13" fill="#757575"><path d="M8 0v13L0 6.500z" /></svg>
              </StatusNav>
              <StatusField $w={89}><span>1</span><Drop><Chevron /></Drop></StatusField>
              <StatusNav $w={62}>
                <svg width="8" height="13" viewBox="0 0 8 13" fill="#757575"><path d="M0 0v13L8 6.500z" /></svg>
                <svg width="13" height="13" viewBox="0 0 13 13" fill="#757575"><path d="M10 0h3v13h-3z M1 0v13L9 6.500z" /></svg>
              </StatusNav>
              <StatusText>选择</StatusText>
              <StatusNav $w={26}><svg width="8" height="13" viewBox="0 0 8 13" fill="#c8c8c8"><path d="M0 0v13L8 6.500z" /></svg></StatusNav>
              <HScroll>
                <Chevron dir="left" color="#a4a4a4" w={1.8} />
                <Thumb />
                <Chevron dir="right" color="#a4a4a4" w={1.8} />
              </HScroll>
            </StatusBar>
            <BottomEdge />
          </Center>

          <Docks>
            <Dock>
              <PanelHeader $right><Collapse /></PanelHeader>
              <DockGroup $h={104}>
                <Grip />
                <DockItem>
                  <DockIcon y={183}><path d="M115 192 C115 175 135 190 147 178 C152 165 138 160 150 152 C170 145 201 160 200 185 C198 205 175 213 155 213 C130 213 115 205 115 192Z" /><g fill="#535353"><circle cx="136" cy="193" r="9" /><circle cx="155" cy="200" r="8" /><circle cx="175" cy="197" r="8" /><circle cx="186" cy="185" r="6" /><circle cx="183" cy="172" r="6" /></g></DockIcon>
                </DockItem>
                <DockItem>
                  <DockIcon y={310}><path d="M125 275 A70 69 0 0 1 194 343 H125Z" fill="#3a3a3a" stroke={ICON} strokeWidth="4" /><path d="M127 341 L150 283 L164 293Z" fill="#666" /><path d="M127 341 L164 293 L178 307Z" fill="#888" /><path d="M127 341 L178 307 L187 324Z" fill="#b0b0b0" /><path d="M127 341 L187 324 L191 341Z" fill="#e4e4e4" /></DockIcon>
                </DockItem>
              </DockGroup>
              <DockGroup $h={145}>
                <Grip />
                <DockItem>
                  <DockIcon y={494}><rect x="118" y="468" width="74" height="51" rx="3" /><path d="M122 473h20v20h-20z M145 497h20v19h-20z M168 497h20v19h-20z" fill="#8d8d8d" /><path d="M168 473h20v20h-20z M122 497h20v19h-20z" fill="#5d5d5d" /></DockIcon>
                </DockItem>
                <DockItem>
                  <DockIcon y={620}><path d="M136 634 Q136 629 142 629 H174 Q180 629 180 634 V657 Q180 663 174 663 H142 Q136 663 136 657Z M143 577 h5 v-4 h7 v4 h5 v16 l-4 5 v28 h-5 v-28 l-7 -7z M123 589 Q137 594 140 607 L147 628 H141 L131 611 Q122 606 123 589Z M167 600 C173 588 190 590 196 603 C193 612 185 614 181 609 L167 628 H161 L175 604Z" /></DockIcon>
                </DockItem>
                <DockItem>
                  <DockIcon y={745}><circle cx="157" cy="720" r="16" /><circle cx="137" cy="745" r="16" /><circle cx="178" cy="745" r="16" /><path d="M154 735 h7 q0 34 22 42 v4 h-51 v-4 q22 -8 22 -42z M148 730h18v20h-18z" /></DockIcon>
                </DockItem>
              </DockGroup>
              <DockGroup $h={145}>
                <Grip />
                <DockItem><DockIcon y={89}><path d="M118 61h79v5h-79z M118 80h79v9h-79z M118 102h79v15h-79z" /></DockIcon></DockItem>
                <DockItem><DockIcon y={215}><rect x="120" y="189" width="76" height="52" fill="url(#toolGrad)" stroke={ICON} strokeWidth="4" /></DockIcon></DockItem>
                <DockItem><DockIcon y={344}><circle cx="143" cy="334" r="29" /><circle cx="166" cy="356" r="28" fill="#6e6e6e" fillOpacity=".85" stroke={ICON} strokeWidth="3" /></DockIcon></DockItem>
              </DockGroup>
              <DockGroup $h={147}>
                <Grip />
                <DockItem $on><DockIcon y={524}><path d="M157 488 L195 515 L157 541 L120 515Z M128 532 L157 551 L187 532 L195 539 L157 565 L120 539Z" /></DockIcon></DockItem>
                <DockItem><DockIcon y={651}><path d="M156 621 H121 V690 H190 V656" fill="none" stroke={ICON} strokeWidth="6" /><path d="M176 609 H201 V637 H194 V624 L173 645 L166 638 L187 617 H176Z" /></DockIcon></DockItem>
                <DockItem><DockIcon y={777}><path d="M134 798 H115 V737 H163 V767 M134 769 H196 V817 H134Z" fill="none" stroke={ICON} strokeWidth="4" /></DockIcon></DockItem>
              </DockGroup>
            </Dock>
            <Dock>
              <PanelHeader $right><Collapse /></PanelHeader>
              <DockGroup $h={104}>
                <Grip />
                <DockItem>
                  <DockIcon x={338} y={183}><path d="M324 143 L347 154 V182 L324 194 L301 182 V154Z" fill="#707070" stroke={ICON} strokeWidth="4" /><path d="M301 154 L324 166 L347 154 M324 166 V194" fill="none" stroke={ICON} strokeWidth="4" /><path d="M359 146h19v19h-19z M359 172h19v19h-19z M298 205h80v19h-80z" /><path d="M360 211h11l-5.500 6z" fill="#444" /></DockIcon>
                </DockItem>
                <DockItem>
                  <DockIcon x={338} y={310}><path d="M308 336 H299 V272 H361 V280 M308 281 H371 V343 H308Z" fill="none" stroke={ICON} strokeWidth="4" /><path d="M338 281h19v39l-9.500 -9l-9.500 9z" /></DockIcon>
                </DockItem>
              </DockGroup>
            </Dock>
          </Docks>
        </Body>

        <LayersPanel>
          <LayersTabs>
            <LayersTab $w={65} $on>图层</LayersTab>
            <LayersTab $w={99}>资源导出</LayersTab>
            <LayersTab $w={65}>画板</LayersTab>
            <LayersTools>
              <svg width="54" height="18" viewBox="0 0 54 18" fill="none" stroke="#d0d0d0" strokeWidth="1.700">
                <path d="M2 4.500 L7 9 L2 13.500 M9.500 4.500 L14.500 9 L9.500 13.500 M26.500 1 V17" />
                <path d="M38 4 H54 M38 9 H54 M38 14 H54" strokeWidth="1.400" stroke="#a8a8a8" />
              </svg>
            </LayersTools>
          </LayersTabs>
          <LayerList>
            <LayerRow $on>
              <LayerCell><Eye /></LayerCell><LayerCell /><LayerColor $c="#ff4f4f" />
              <LayerName><Expander /><Thumbnail /><span>图层 2</span></LayerName>
              <LayerCell $last><Target /></LayerCell>
              <RowCorner />
            </LayerRow>
            <LayerRow>
              <LayerCell><Eye /></LayerCell><LayerCell /><LayerColor $c="#4f80ff" />
              <LayerName>
                <Expander><Chevron dir="right" w={2.4} /></Expander>
                <Thumbnail>
                  <svg width="25" height="25" viewBox="0 0 25 25">
                    <path d="M6 4.500 H20" stroke="#222" strokeDasharray="5 1" />
                    <path d="M2 8.500 H24" stroke="#b44" strokeWidth="3" strokeDasharray="1.500 .6" />
                    <path d="M2 11.500 H24" stroke="#444" strokeWidth="3" strokeDasharray="1 1" />
                    <path d="M2 14.500 H24" stroke="#44b" strokeWidth="3" strokeDasharray="1.500 .6" />
                    <path d="M2 19 H24" stroke="#bbb" strokeWidth="2" strokeDasharray="1 .8" />
                  </svg>
                </Thumbnail>
                <span>图层 1</span>
              </LayerName>
              <LayerCell $last><Target /></LayerCell>
            </LayerRow>
          </LayerList>
          <LayersFooter>
            2 图层
            <svg width="210" height="24" viewBox="0 0 210 24" fill="none" stroke="#757575" strokeWidth="1.800">
              <path d="M6 7 H1 V20 H14 V14 M8 14 L17 4 M11 3.500 H17.500 V10" />
              <circle cx="50" cy="9" r="6.500" /><path d="M45.500 13.500 L39 20.500" strokeWidth="2.600" />
              <path d="M78 4h12v12H78z M84 10h10v10H82v-4" stroke="#686868" /><path d="M82 8h8v8h-8z" fill="#757575" stroke="none" />
              <path d="M115 4 V11 H121 M118.500 8 L122 11 L118.500 14" stroke={ICON} />
              <path d="M124 5h11v13h-5v-5h-6z M123.500 14h4.500v4.500z" fill={ICON} stroke="none" />
              <path d="M152 1h20v22h-20z" fill="#666" stroke="none" />
              <path d="M157 4h15v15.500h-8v-8h-7z M157.500 13h5v5.500z" fill="#fff" stroke="none" />
              <path d="M195 7h16M199 6V3.500h7V6 M197 8l1 12h10l1-12 M200.500 9v9 M203 9v9 M205.500 9v9" stroke={ICON} strokeWidth="1.500" />
            </svg>
          </LayersFooter>
          <FooterEdge><Grip /></FooterEdge>
        </LayersPanel>

        <Tooltip>创建新图层</Tooltip>
        <Annotation width="140" height="260" viewBox="1680 620 140 260">
          <path d="M1772 632.500 L1773.500 634 L1728.700 767.300 L1738 766 Q1722 773 1710.700 789.500 L1706 753 L1712 760.700 Z" fill="#ff2213" />
          <rect x="1690.500" y="794.500" width="40" height="35" rx="2" fill="none" stroke="#ff2213" strokeWidth="5" />
          <path d="M1701 869.500 L1805 869" stroke="#ff2213" strokeWidth="7" strokeLinecap="round" />
        </Annotation>
      </Shell>
    </>
  );
}
